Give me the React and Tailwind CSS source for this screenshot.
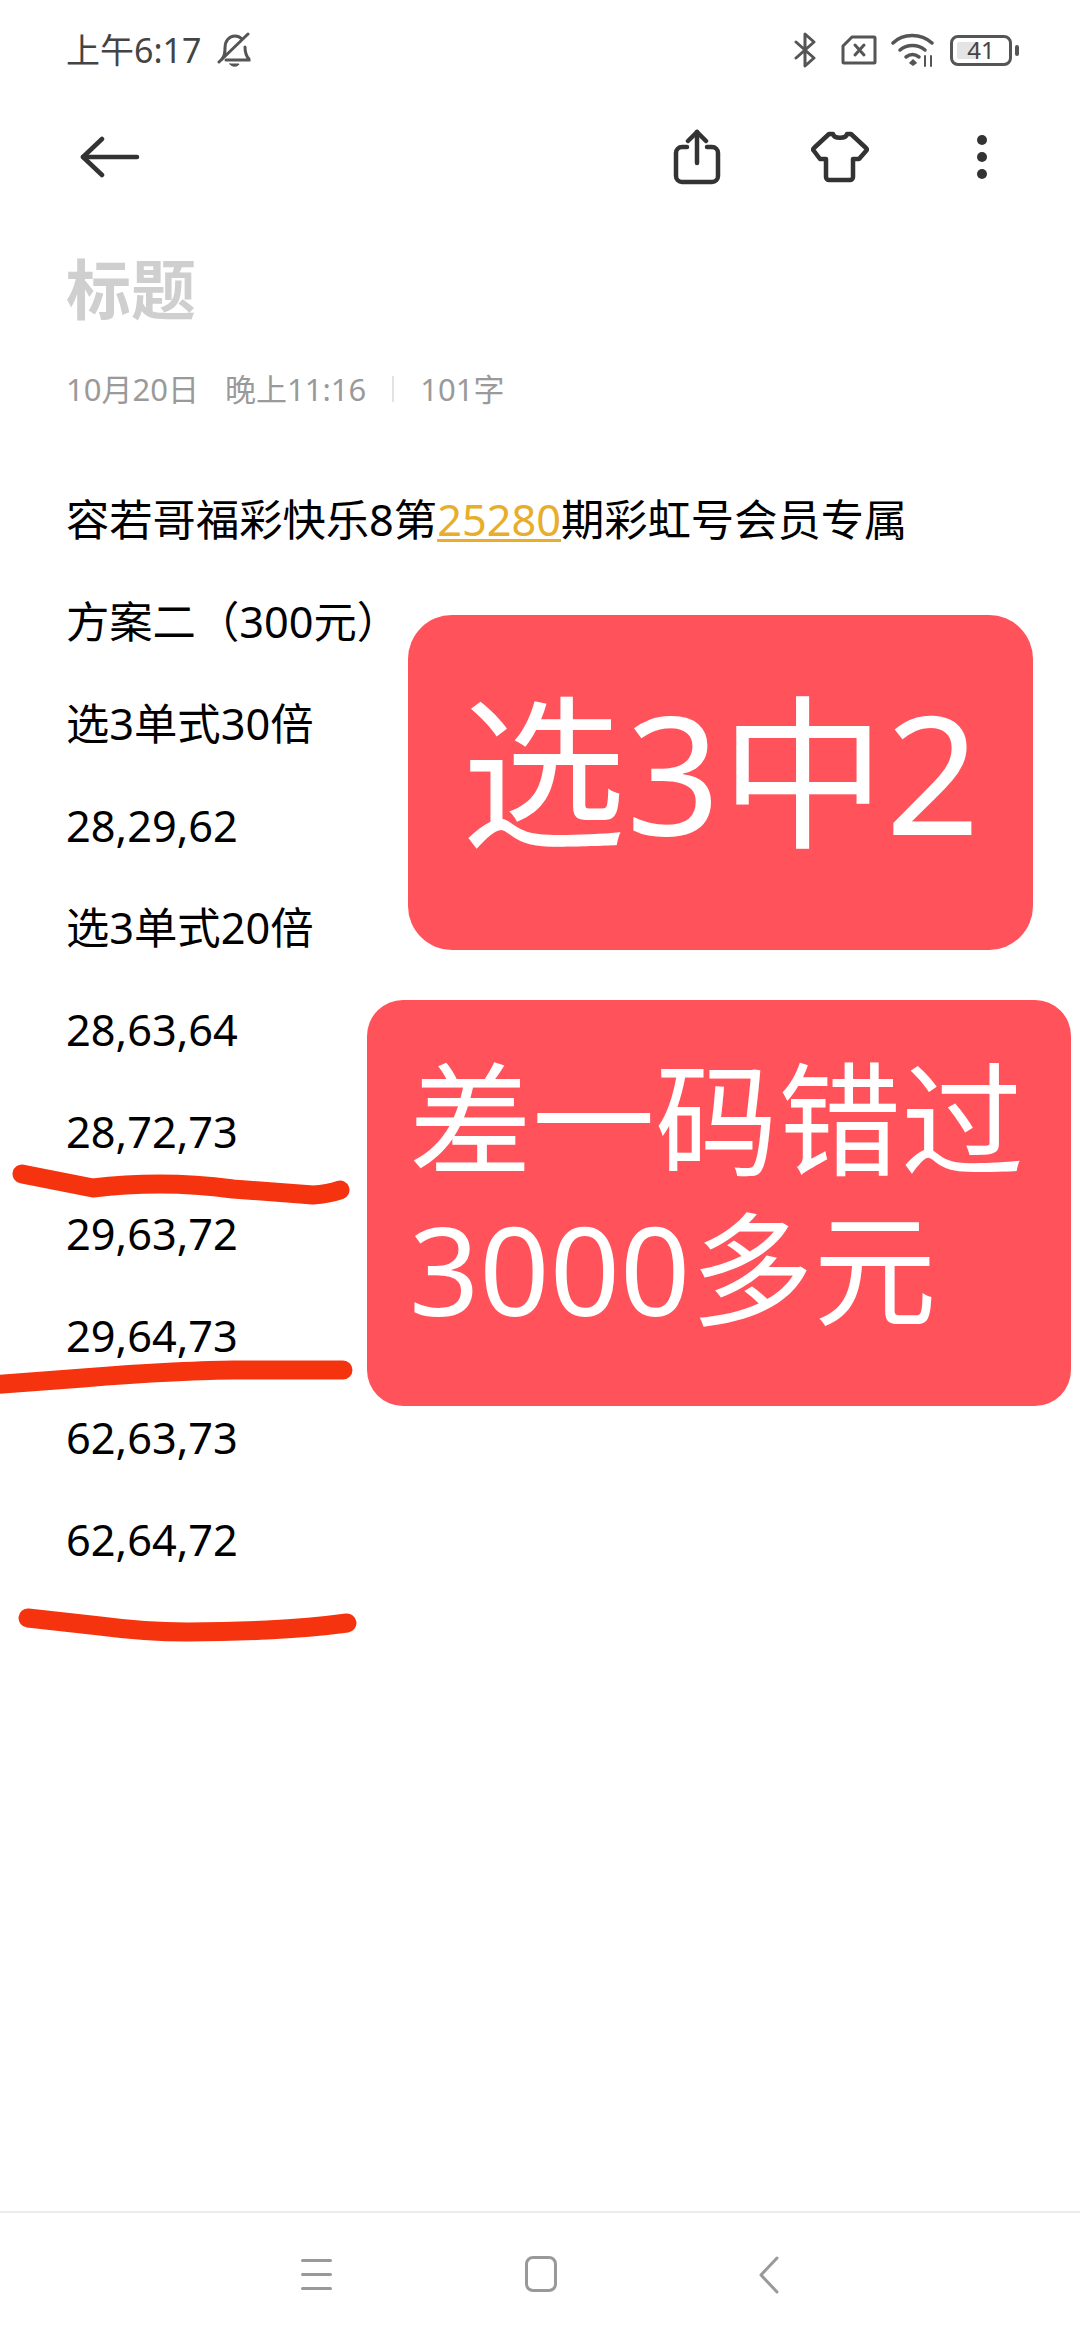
const FONT = "font-['Noto_Sans','Noto_Sans_CJK_SC',sans-serif]";

const rows = [
  '方案二（300元）',
  '选3单式30倍',
  '28,29,62',
  '选3单式20倍',
  '28,63,64',
  '28,72,73',
  '29,63,72',
  '29,64,73',
  '62,63,73',
  '62,64,72',
];

function StatusBar() {
  return (
    <div className="flex items-center justify-between h-[68px] mt-[16px] pl-[66px] pr-[68px] text-[#444]">
      <div className="flex items-center">
        <span className="text-[34px] leading-none">上午6:17</span>
        <svg className="ml-[16px]" width="34" height="36" viewBox="0 0 34 36" fill="none" stroke="#555" strokeWidth="3" strokeLinecap="round">
          <path d="M5 27c3-3 3-6 3-11 0-7 4-12 10-12 3 0 5 1 7 3" />
          <path d="M28 15c0 6 1 9 4 12v1H9" />
          <path d="M2 30 31 2" />
          <path d="M13 32h9c-1 3-8 3-9 0z" fill="#555" strokeWidth="1" />
        </svg>
      </div>
      <div className="flex items-center">
        <svg width="22" height="36" viewBox="0 0 22 36" fill="none" stroke="#555" strokeWidth="3" strokeLinecap="round" strokeLinejoin="round">
          <path d="M2 10 20 26 11 34V2l9 8L2 26" />
        </svg>
        <svg className="ml-[25px]" width="36" height="30" viewBox="0 0 36 30" fill="none" stroke="#555" strokeWidth="3" strokeLinejoin="round" strokeLinecap="round">
          <path d="M11 2h22a1 1 0 0 1 1 1v24a1 1 0 0 1-1 1H3a1 1 0 0 1-1-1V11z" />
          <path d="M14 10l9 10M23 10l-9 10" />
        </svg>
        <svg className="ml-[14px]" width="44" height="36" viewBox="0 0 44 36" fill="none" stroke="#555" strokeWidth="3.5" strokeLinecap="round">
          <path d="M2 11C12 1 30 1 41 11" />
          <path d="M9 18c7-6 18-6 25 0" />
          <path d="M15 25c4-3 9-3 13 0" />
          <path d="M19 31l3-3 3 3-3 2z" fill="#555" strokeWidth="1.5" />
          <path d="M34 24v10M40 24v10" strokeWidth="2" />
        </svg>
        <div className="ml-[15px] relative flex items-center justify-center w-[62px] h-[31px] rounded-[8px] border-[3.5px] border-[#555]">
          <div className="absolute left-[4px] top-[4px] bottom-[4px] w-[22px] bg-[#e4e4e4] rounded-[2px]" />
          <span className="relative text-[24px] leading-none">41</span>
          <div className="absolute right-[-10px] w-[4px] h-[11px] rounded-full bg-[#555]" />
        </div>
      </div>
    </div>
  );
}

function Toolbar() {
  return (
    <div className="flex items-center h-[72px] mt-[37px] pl-[80px] text-[#333]">
      <svg width="60" height="42" viewBox="0 0 60 42" fill="none" stroke="#333" strokeWidth="4.5" strokeLinecap="round" strokeLinejoin="round">
        <path d="M22 3 3 21l19 18" />
        <path d="M3 21h54" />
      </svg>
      <svg className="ml-[533px]" width="48" height="56" viewBox="0 0 48 56" fill="none" stroke="#333" strokeWidth="4.5" strokeLinecap="round" strokeLinejoin="round">
        <path d="M14 18H9a6 6 0 0 0-6 6v23a6 6 0 0 0 6 6h30a6 6 0 0 0 6-6V24a6 6 0 0 0-6-6h-5" />
        <path d="M24 34V3" />
        <path d="M15 12l9-9 9 9" />
      </svg>
      <svg className="ml-[90px]" width="58" height="52" viewBox="0 0 58 52" fill="none" stroke="#333" strokeWidth="4.5" strokeLinecap="round" strokeLinejoin="round">
        <path d="M18 3h4c1 5 13 5 14 0h4l15 14c1 1 1 2 0 3l-7 8h-6v18a3 3 0 0 1-3 3H18a3 3 0 0 1-3-3V28H9l-6-8c-1-1-1-2 0-3z" />
      </svg>
      <div className="ml-[108px] flex flex-col gap-[7px]">
        <div className="w-[10px] h-[10px] rounded-full bg-[#333]" />
        <div className="w-[10px] h-[10px] rounded-full bg-[#333]" />
        <div className="w-[10px] h-[10px] rounded-full bg-[#333]" />
      </div>
    </div>
  );
}

function NavBar() {
  return (
    <div className="mt-auto h-[129px] border-t-2 border-[#ececec] flex items-start pt-[43px] pl-[301px]">
      <div className="flex flex-col gap-[11px] w-[31px] mt-[3px]">
        <div className="h-[3px] rounded-full bg-[#999]" />
        <div className="h-[3px] rounded-full bg-[#999]" />
        <div className="h-[3px] rounded-full bg-[#999]" />
      </div>
      <div className="ml-[193px] w-[32px] h-[36px] rounded-[8px] border-[3.5px] border-[#999]" />
      <svg className="ml-[202px]" width="20" height="38" viewBox="0 0 20 38" fill="none" stroke="#999" strokeWidth="3" strokeLinecap="round" strokeLinejoin="round">
        <path d="M18 2 2 19l16 17" />
      </svg>
    </div>
  );
}

export default function App() {
  return (
    <div className={`relative w-[1080px] h-[2340px] bg-white overflow-hidden flex flex-col ${FONT}`}>
      <StatusBar />
      <Toolbar />

      {/* Note */}
      <div className="px-[66px] mt-[56px]">
        <h1 className="text-[65px] leading-[80px] font-bold text-[#cfcfcf]">标题</h1>
        <div className="flex items-center mt-[40px] text-[31px] leading-[40px] text-[#9a9a9a]">
          <span>10月20日</span>
          <span className="ml-[26px]">晚上11:16</span>
          <span className="ml-[26px] w-[2px] h-[26px] bg-[#e2e2e2]" />
          <span className="ml-[26px]">101字</span>
        </div>
        <div className="flex flex-col items-start mt-[60px] text-[43.3px] leading-[102px] text-black">
          <div className="w-fit">
            容若哥福彩快乐8第
            <span className="text-[#e8ad2a] underline decoration-[3px] underline-offset-[3px]">25280</span>
            期彩虹号会员专属
          </div>
          {rows.map((row, i) => (
            <div key={i} className="w-fit">{row}</div>
          ))}
        </div>
      </div>

      <NavBar />

      {/* Stickers over the note */}
      <div className="absolute left-[408px] top-[615px] w-[625px] h-[335px] rounded-[44px] bg-[#ff525a] flex items-center justify-center text-white text-[165px] leading-none pb-[22px]">
        选3中2
      </div>
      <div className="absolute left-[367px] top-[1000px] w-[704px] h-[406px] rounded-[36px] bg-[#ff525a] text-white text-[123px] leading-[150px] pl-[42px] pt-[44px]">
        <div>差一码错过</div>
        <div>3000多元</div>
      </div>

      {/* Hand drawn strokes */}
      <svg className="absolute left-0 top-0 pointer-events-none" width="1080" height="2340" fill="none" stroke="#f5340f" strokeWidth="19" strokeLinecap="round" strokeLinejoin="round">
        <path d="M22 1174 93 1188Q125 1184 160 1184T233 1189L313 1195Q328 1194 340 1190" />
        <path d="M-10 1385 83 1378Q130 1374 173 1372T233 1370H343" />
        <path d="M28 1618 100 1626Q145 1632 187 1632T267 1630Q310 1628 347 1623" />
      </svg>
    </div>
  );
}
